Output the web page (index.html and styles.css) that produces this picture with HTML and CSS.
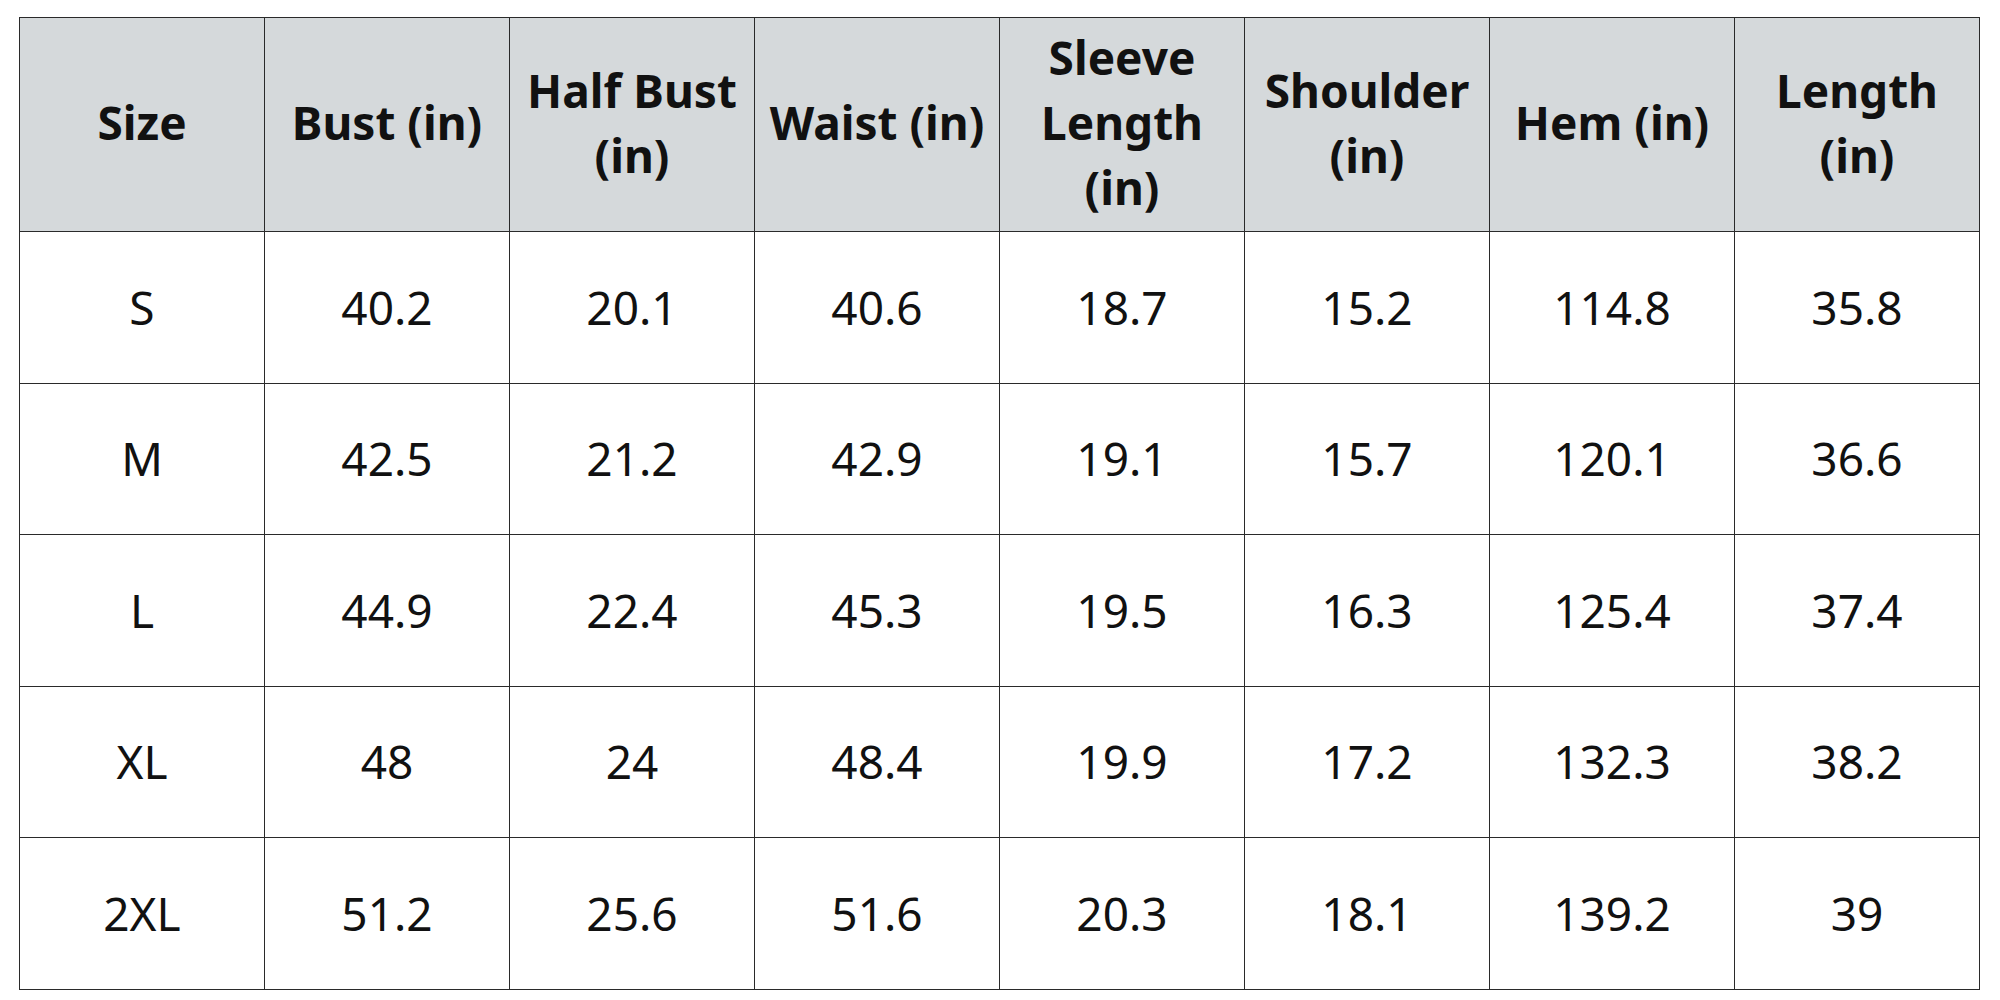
FILE: index.html
```html
<!DOCTYPE html>
<html>
<head>
<meta charset="utf-8">
<link rel="stylesheet" href="styles.css">
</head>
<body>
<table class="size-table">
  <thead>
    <tr>
      <th>Size</th>
      <th>Bust (in)</th>
      <th>Half Bust<br>(in)</th>
      <th>Waist (in)</th>
      <th>Sleeve<br>Length<br>(in)</th>
      <th>Shoulder<br>(in)</th>
      <th>Hem (in)</th>
      <th>Length<br>(in)</th>
    </tr>
  </thead>
  <tbody>
    <tr><td>S</td><td>40.2</td><td>20.1</td><td>40.6</td><td>18.7</td><td>15.2</td><td>114.8</td><td>35.8</td></tr>
    <tr><td>M</td><td>42.5</td><td>21.2</td><td>42.9</td><td>19.1</td><td>15.7</td><td>120.1</td><td>36.6</td></tr>
    <tr><td>L</td><td>44.9</td><td>22.4</td><td>45.3</td><td>19.5</td><td>16.3</td><td>125.4</td><td>37.4</td></tr>
    <tr><td>XL</td><td>48</td><td>24</td><td>48.4</td><td>19.9</td><td>17.2</td><td>132.3</td><td>38.2</td></tr>
    <tr><td>2XL</td><td>51.2</td><td>25.6</td><td>51.6</td><td>20.3</td><td>18.1</td><td>139.2</td><td>39</td></tr>
  </tbody>
</table>
</body>
</html>
```

FILE: styles.css
```css
html, body {
  margin: 0;
  padding: 0;
  background: #ffffff;
}

body {
  padding: 17px 0 0 19px;
  font-family: "Noto Sans", "Open Sans", sans-serif;
  color: #111111;
}

.size-table {
  border-collapse: collapse;
  table-layout: fixed;
  width: 1961px;
}

.size-table th,
.size-table td {
  border: 1px solid #2a2a2a;
  text-align: center;
  vertical-align: middle;
  padding: 0;
}

.size-table thead tr {
  height: 214px;
}

.size-table th {
  background: #d5d9db;
  font-weight: 700;
  font-size: 46px;
  line-height: 65px;
  padding-bottom: 4px;
}

.size-table tbody tr {
  height: 151.5px;
}

.size-table td {
  font-weight: 400;
  font-size: 46px;
  line-height: 1.2;
}
```
